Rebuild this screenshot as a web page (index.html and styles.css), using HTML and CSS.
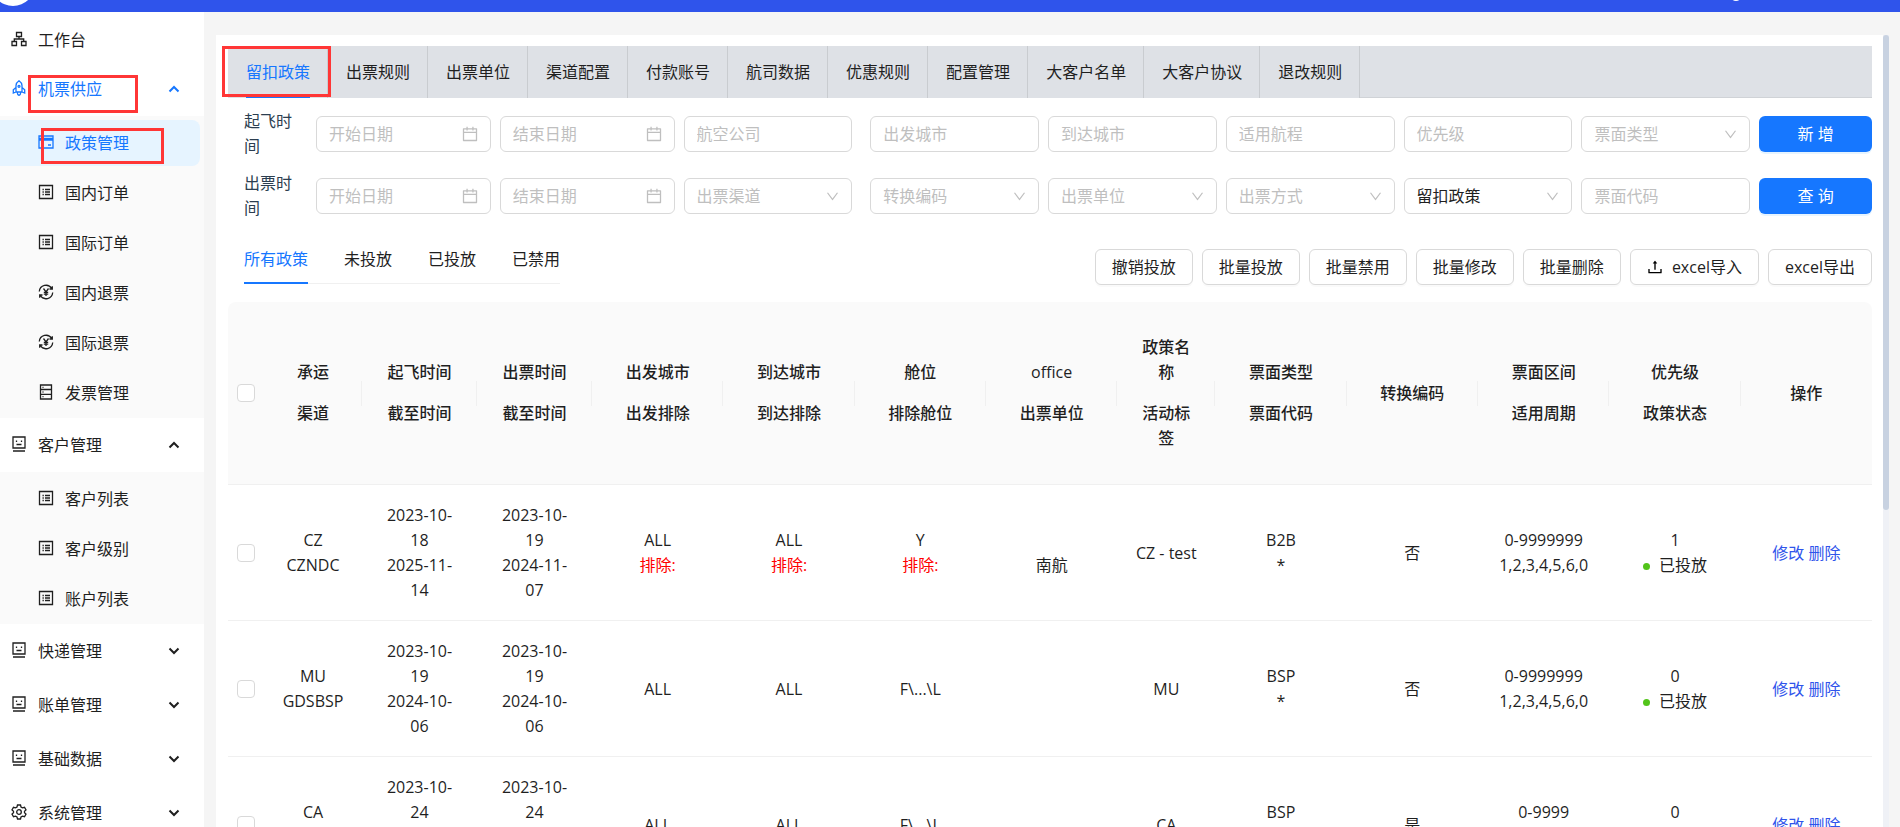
FILE: index.html
```html
<!DOCTYPE html>
<html lang="zh-CN">
<head>
<meta charset="UTF-8">
<meta name="viewport" content="width=device-width, initial-scale=1.0">
<title>政策管理</title>
<link rel="stylesheet" href="styles.css">
</head>
<body>
<!-- icons -->
<svg class="sprite" aria-hidden="true">
    <symbol id="i-cluster" viewBox="0 0 16 16"><path d="M5.500 1.500h5v4h-5zM1 10.500h4.500v4H1zM10.500 10.500H15v4h-4.500zM8 5.500V8M3.300 10.500V8h9.400v2.500"/></symbol>
    <symbol id="i-rocket" viewBox="0 0 16 16"><path d="M5 12V5.500C5 3.500 6.500 1.800 8 .8c1.500 1 3 2.700 3 4.700V12zM5 7.500l-2.700 2.300V13L5 12M11 7.500l2.700 2.300V13L11 12M6.300 12.500c0 1.500.8 2.500 1.700 2.900.9-.4 1.700-1.400 1.700-2.900"/><circle cx="8" cy="6.300" r="1"/></symbol>
    <symbol id="i-card" viewBox="0 0 16 16"><path d="M1 2h14v12H1zM1 6h14M1 4.500h14M10 11h3"/></symbol>
    <symbol id="i-profile" viewBox="0 0 16 16"><path d="M1.500 1.500h13v13h-13zM7 5.500h5M7 8h5M7 10.500h5M4.500 5.500h1.300M4.500 8h1.300M4.500 10.500h1.300"/></symbol>
    <symbol id="i-refund" viewBox="0 0 16 16"><path d="M1.300 7.500A6.700 6.700 0 0 1 13.700 4.500M14.700 8.500A6.700 6.700 0 0 1 2.300 11.500M14.300 2.200v2.800h-2.800M1.700 13.800V11h2.800M5.500 4.500L8 7.800l2.500-3.300M8 7.800V12M5.800 8.300h4.400M5.800 10.200h4.400"/></symbol>
    <symbol id="i-database" viewBox="0 0 16 16"><path d="M2.500 1h11v14h-11zM2.500 5.500h11M2.500 10.300h11M4.500 3.300h1M4.500 8h1M4.500 12.700h1"/></symbol>
    <symbol id="i-face" viewBox="0 0 16 16"><path d="M2 1h12v11H2zM2 15h12M5.500 4.500V6M10.500 4.500V6M5.500 8.500h5"/></symbol>
    <symbol id="i-setting" viewBox="0 0 16 16"><path d="M6.500 1h3l.5 2 1.500.9 2-.6 1.500 2.600L13.500 7.300v1.400L15 10.100l-1.500 2.600-2-.6-1.500.9-.5 2h-3L6 13l-1.500-.9-2 .6L1 10.100l1.500-1.400V7.300L1 5.900l1.500-2.600 2 .6L6 3z"/><circle cx="8" cy="8" r="2.300"/></symbol>
    <symbol id="i-arrow" viewBox="0 0 12 12"><path d="M1.500 3.500L6 8l4.500-4.500"/></symbol>
    <symbol id="i-down" viewBox="64 64 896 896"><path d="M884 256h-75c-5.100 0-9.900 2.500-12.900 6.600L512 654.200 227.900 262.600c-3-4.100-7.800-6.600-12.900-6.600h-75c-6.500 0-10.300 7.400-6.500 12.700l352.600 486.100c12.800 17.600 39 17.600 51.700 0l352.600-486.100c3.900-5.300.1-12.700-6.400-12.700z"/></symbol>
    <symbol id="i-calendar" viewBox="64 64 896 896"><path d="M880 184H712v-64c0-4.400-3.600-8-8-8h-56c-4.400 0-8 3.600-8 8v64H384v-64c0-4.400-3.600-8-8-8h-56c-4.400 0-8 3.600-8 8v64H144c-17.700 0-32 14.300-32 32v664c0 17.700 14.300 32 32 32h736c17.700 0 32-14.300 32-32V216c0-17.700-14.300-32-32-32zm-40 656H184V460h656v380zM184 392V256h128v48c0 4.400 3.600 8 8 8h56c4.400 0 8-3.600 8-8v-48h256v48c0 4.400 3.600 8 8 8h56c4.400 0 8-3.600 8-8v-48h128v136H184z"/></symbol>
    <symbol id="i-upload" viewBox="64 64 896 896"><path d="M400 317.700h73.900V656c0 4.400 3.600 8 8 8h60c4.400 0 8-3.600 8-8V317.700H624c6.700 0 10.400-7.700 6.300-12.900L518.300 163a8 8 0 00-12.600 0l-112 141.700c-4.100 5.300-.4 13 6.300 13zM878 626h-60c-4.400 0-8 3.600-8 8v154H214V634c0-4.400-3.600-8-8-8h-60c-4.400 0-8 3.600-8 8v198c0 17.700 14.300 32 32 32h684c17.700 0 32-14.300 32-32V634c0-4.400-3.600-8-8-8z"/></symbol>
</svg>

<header class="topbar">
    <span class="logo"></span>
    <span class="avatar"></span>
</header>

<div class="layout">
    <nav class="sidebar">
        <a href="#" class="menu-title first"><svg class="icon"><use href="#i-cluster"/></svg><span>工作台</span></a>
        <a href="#" class="menu-title active"><svg class="icon"><use href="#i-rocket"/></svg><span>机票供应</span><svg class="arrow up"><use href="#i-arrow"/></svg><i class="mark mark-supply"></i></a>
        <div class="submenu">
            <a href="#" class="menu-item selected"><svg class="icon"><use href="#i-card"/></svg><span>政策管理</span><i class="mark mark-policy"></i></a>
            <a href="#" class="menu-item"><svg class="icon"><use href="#i-profile"/></svg><span>国内订单</span></a>
            <a href="#" class="menu-item"><svg class="icon"><use href="#i-profile"/></svg><span>国际订单</span></a>
            <a href="#" class="menu-item"><svg class="icon"><use href="#i-refund"/></svg><span>国内退票</span></a>
            <a href="#" class="menu-item"><svg class="icon"><use href="#i-refund"/></svg><span>国际退票</span></a>
            <a href="#" class="menu-item"><svg class="icon"><use href="#i-database"/></svg><span>发票管理</span></a>
        </div>
        <a href="#" class="menu-title"><svg class="icon"><use href="#i-face"/></svg><span>客户管理</span><svg class="arrow up"><use href="#i-arrow"/></svg></a>
        <div class="submenu">
            <a href="#" class="menu-item"><svg class="icon"><use href="#i-profile"/></svg><span>客户列表</span></a>
            <a href="#" class="menu-item"><svg class="icon"><use href="#i-profile"/></svg><span>客户级别</span></a>
            <a href="#" class="menu-item"><svg class="icon"><use href="#i-profile"/></svg><span>账户列表</span></a>
        </div>
        <a href="#" class="menu-title"><svg class="icon"><use href="#i-face"/></svg><span>快递管理</span><svg class="arrow"><use href="#i-arrow"/></svg></a>
        <a href="#" class="menu-title"><svg class="icon"><use href="#i-face"/></svg><span>账单管理</span><svg class="arrow"><use href="#i-arrow"/></svg></a>
        <a href="#" class="menu-title"><svg class="icon"><use href="#i-face"/></svg><span>基础数据</span><svg class="arrow"><use href="#i-arrow"/></svg></a>
        <a href="#" class="menu-title"><svg class="icon"><use href="#i-setting"/></svg><span>系统管理</span><svg class="arrow"><use href="#i-arrow"/></svg></a>
    </nav>

    <main class="content">
        <div class="panel">
            <div class="tabs">
                <a href="#" class="tab active"><span>留扣政策</span><i class="mark mark-tab"></i></a>
                <a href="#" class="tab">出票规则</a>
                <a href="#" class="tab">出票单位</a>
                <a href="#" class="tab">渠道配置</a>
                <a href="#" class="tab">付款账号</a>
                <a href="#" class="tab">航司数据</a>
                <a href="#" class="tab">优惠规则</a>
                <a href="#" class="tab">配置管理</a>
                <a href="#" class="tab">大客户名单</a>
                <a href="#" class="tab">大客户协议</a>
                <a href="#" class="tab">退改规则</a>
            </div>

            <form class="filters">
                <label for="flyStart">起飞时间</label>
                <div class="field"><input type="text" id="flyStart" placeholder="开始日期"><svg class="suffix calendar"><use href="#i-calendar"/></svg></div>
                <div class="field"><input type="text" aria-label="起飞结束日期" placeholder="结束日期"><svg class="suffix calendar"><use href="#i-calendar"/></svg></div>
                <div class="field airline"><input type="text" aria-label="航空公司" placeholder="航空公司"></div>
                <div class="field"><input type="text" aria-label="出发城市" placeholder="出发城市"></div>
                <div class="field"><input type="text" aria-label="到达城市" placeholder="到达城市"></div>
                <div class="field"><input type="text" aria-label="适用航程" placeholder="适用航程"></div>
                <div class="field"><input type="text" aria-label="优先级" placeholder="优先级"></div>
                <div class="field"><select class="empty" aria-label="票面类型"><option>票面类型</option></select><svg class="suffix"><use href="#i-down"/></svg></div>
                <button type="button" class="btn-primary">新 增</button>

                <label for="issueStart">出票时间</label>
                <div class="field"><input type="text" id="issueStart" placeholder="开始日期"><svg class="suffix calendar"><use href="#i-calendar"/></svg></div>
                <div class="field"><input type="text" aria-label="出票结束日期" placeholder="结束日期"><svg class="suffix calendar"><use href="#i-calendar"/></svg></div>
                <div class="field airline"><select class="empty" aria-label="出票渠道"><option>出票渠道</option></select><svg class="suffix"><use href="#i-down"/></svg></div>
                <div class="field"><select class="empty" aria-label="转换编码"><option>转换编码</option></select><svg class="suffix"><use href="#i-down"/></svg></div>
                <div class="field"><select class="empty" aria-label="出票单位"><option>出票单位</option></select><svg class="suffix"><use href="#i-down"/></svg></div>
                <div class="field"><select class="empty" aria-label="出票方式"><option>出票方式</option></select><svg class="suffix"><use href="#i-down"/></svg></div>
                <div class="field"><select aria-label="政策种类"><option>留扣政策</option></select><svg class="suffix"><use href="#i-down"/></svg></div>
                <div class="field"><input type="text" aria-label="票面代码" placeholder="票面代码"></div>
                <button type="button" class="btn-primary">查 询</button>
            </form>

            <div class="toolbar">
                <div class="status-tabs">
                    <a href="#" class="active">所有政策</a>
                    <a href="#">未投放</a>
                    <a href="#">已投放</a>
                    <a href="#">已禁用</a>
                </div>
                <div class="actions">
                    <button type="button" class="btn">撤销投放</button>
                    <button type="button" class="btn">批量投放</button>
                    <button type="button" class="btn">批量禁用</button>
                    <button type="button" class="btn">批量修改</button>
                    <button type="button" class="btn">批量删除</button>
                    <button type="button" class="btn"><svg class="upload"><use href="#i-upload"/></svg>excel导入</button>
                    <button type="button" class="btn">excel导出</button>
                </div>
            </div>

            <table class="policy-table">
                <colgroup>
                    <col class="w-check"><col class="w-small"><col class="w-date"><col class="w-date">
                    <col><col><col><col><col class="w-small"><col><col><col><col><col>
                </colgroup>
                <thead>
                    <tr>
                        <th class="check"><input type="checkbox" aria-label="全选"></th>
                        <th><p>承运</p><p>渠道</p></th>
                        <th><p>起飞时间</p><p>截至时间</p></th>
                        <th><p>出票时间</p><p>截至时间</p></th>
                        <th><p>出发城市</p><p>出发排除</p></th>
                        <th><p>到达城市</p><p>到达排除</p></th>
                        <th><p>舱位</p><p>排除舱位</p></th>
                        <th><p class="latin">office</p><p>出票单位</p></th>
                        <th><p>政策名称</p><p>活动标签</p></th>
                        <th><p>票面类型</p><p>票面代码</p></th>
                        <th>转换编码</th>
                        <th><p>票面区间</p><p>适用周期</p></th>
                        <th><p>优先级</p><p>政策状态</p></th>
                        <th>操作</th>
                    </tr>
                </thead>
                <tbody>
                    <tr>
                        <td class="check"><input type="checkbox" aria-label="选择 CZ"></td>
                        <td>CZ<br>CZNDC</td>
                        <td>2023-10-18<br>2025-11-14</td>
                        <td>2023-10-19<br>2024-11-07</td>
                        <td>ALL<br><span class="exclude">排除:</span></td>
                        <td>ALL<br><span class="exclude">排除:</span></td>
                        <td>Y<br><span class="exclude">排除:</span></td>
                        <td>&nbsp;<br>南航</td>
                        <td>CZ - test</td>
                        <td>B2B<br>*</td>
                        <td>否</td>
                        <td>0-9999999<br>1,2,3,4,5,6,0</td>
                        <td>1<br><span class="status">已投放</span></td>
                        <td><a href="#">修改</a> <a href="#">删除</a></td>
                    </tr>
                    <tr>
                        <td class="check"><input type="checkbox" aria-label="选择 MU"></td>
                        <td>MU<br>GDSBSP</td>
                        <td>2023-10-19<br>2024-10-06</td>
                        <td>2023-10-19<br>2024-10-06</td>
                        <td>ALL</td>
                        <td>ALL</td>
                        <td>F\...\L</td>
                        <td></td>
                        <td>MU</td>
                        <td>BSP<br>*</td>
                        <td>否</td>
                        <td>0-9999999<br>1,2,3,4,5,6,0</td>
                        <td>0<br><span class="status">已投放</span></td>
                        <td><a href="#">修改</a> <a href="#">删除</a></td>
                    </tr>
                    <tr>
                        <td class="check"><input type="checkbox" aria-label="选择 CA"></td>
                        <td>CA<br>GDSBSP</td>
                        <td>2023-10-24<br>2024-10-06</td>
                        <td>2023-10-24<br>2024-10-06</td>
                        <td>ALL</td>
                        <td>ALL</td>
                        <td>F\...\L</td>
                        <td></td>
                        <td>CA</td>
                        <td>BSP<br>*</td>
                        <td>是</td>
                        <td>0-9999<br>1,2,3,4,5,6,0</td>
                        <td>0<br><span class="status">已投放</span></td>
                        <td><a href="#">修改</a> <a href="#">删除</a></td>
                    </tr>
                </tbody>
            </table>
        </div>
        <div class="scrollbar"><div class="thumb"></div></div>
    </main>
</div>
</body>
</html>
```

FILE: styles.css
```css
* {
    box-sizing: border-box;
}
body {
    display: flex;
    flex-direction: column;
    height: 100vh;
    margin: 0;
    overflow: hidden;
    background-color: #f5f5f5;
    color: #1f1f1f;
    font-family: "Open Sans", "Noto Sans CJK SC", sans-serif;
    font-size: 16px;
    line-height: 25px;
}
a {
    color: inherit;
    text-decoration: none;
}
input, select, button {
    font: inherit;
    color: inherit;
}
.sprite {
    position: absolute;
    width: 0;
    height: 0;
}

/* top bar */
.topbar {
    position: relative;
    flex: none;
    height: 12px;
    overflow: hidden;
    background-color: #2f54eb;
}
.logo {
    position: absolute;
    left: -9px;
    bottom: 6px;
    width: 44px;
    height: 44px;
    border-radius: 50%;
    background-color: #fff;
}
.avatar {
    position: absolute;
    right: 158px;
    bottom: 11px;
    width: 12px;
    height: 12px;
    border-radius: 50%;
    background-color: #fff;
}
.layout {
    display: flex;
    flex: 1;
    min-height: 0;
}

/* sidebar */
.sidebar {
    flex: none;
    width: 204px;
    overflow: hidden;
    background-color: #fff;
}
.menu-title, .menu-item {
    position: relative;
    display: flex;
    align-items: center;
}
.menu-title {
    gap: 11px;
    height: 54px;
    padding: 0 24px 0 11px;
}
.menu-title.first {
    height: 50px;
    padding-top: 6px;
}
.menu-title.active {
    color: #1677ff;
}
.submenu {
    display: flex;
    flex-direction: column;
    gap: 4px;
    padding: 4px 0 2px;
    background-color: #fafafa;
}
.menu-item {
    gap: 11px;
    height: 46px;
    margin-right: 4px;
    padding-left: 38px;
    border-radius: 0 8px 8px 0;
}
.menu-item.selected {
    background-color: #e6f4ff;
    color: #1677ff;
}
.icon, .arrow {
    flex: none;
    width: 16px;
    height: 16px;
    fill: none;
    stroke: currentColor;
}
.icon {
    margin-bottom: 2px;
    stroke-width: 1.3;
}
.arrow {
    width: 12px;
    height: 12px;
    margin-left: auto;
    stroke-width: 2;
}
.arrow.up {
    transform: rotate(180deg);
}

/* red frames */
.mark {
    position: absolute;
    z-index: 1;
    border: 3px solid #ff3636;
    pointer-events: none;
}
.mark-supply {
    left: 28px;
    top: 13px;
    width: 110px;
    height: 38px;
}
.mark-policy {
    left: 41px;
    top: 8px;
    width: 123px;
    height: 36px;
}
.mark-tab {
    left: -6px;
    top: 0;
    width: 109px;
    height: 51px;
}

/* content */
.content {
    display: flex;
    flex: 1;
    min-width: 0;
    padding: 23px 11px 0 12px;
}
.panel {
    flex: 1;
    min-width: 0;
    padding: 11px 11px 0 12px;
    overflow: hidden;
    background-color: #fff;
}
.scrollbar {
    width: 6px;
    background-color: #eff1f6;
}
.thumb {
    height: 60%;
    border-radius: 3px;
    background-color: #c8d2e1;
}
.tabs {
    display: flex;
    height: 52px;
    border-bottom: 1px solid #d0d3d7;
    background-color: #dee1e6;
}
.tab {
    position: relative;
    height: 52px;
    padding: 14px 17px 0 18px;
    border-right: 1px solid #c9ccd0;
    background-color: #dee1e6;
}
.tab.active {
    color: #1677ff;
}
.tab.active span {
    display: block;
    height: 38px;
    border-bottom: 2px solid #1677ff;
}

/* filters */
.filters {
    display: grid;
    grid-template-columns: 63px 175fr 175fr 178fr 169fr 169fr 169fr 169fr 169fr 113fr;
    align-items: center;
    gap: 12px 9px;
    padding: 11px 0 0 16px;
    color: #2c3e50;
}
.field {
    position: relative;
    min-width: 0;
}
.airline {
    margin-right: 9px;
}
.field input, .field select {
    display: block;
    width: 100%;
    height: 36px;
    padding: 0 12px;
    border: 1px solid #d9d9d9;
    border-radius: 6px;
    background-color: #fff;
    color: #1f1f1f;
    appearance: none;
}
.field input::placeholder {
    color: #bfbfbf;
}
.field select.empty {
    color: #bfbfbf;
}
.suffix {
    position: absolute;
    right: 13px;
    top: 12px;
    width: 13px;
    height: 13px;
    fill: #bfbfbf;
    pointer-events: none;
}
.suffix.calendar {
    top: 10px;
    width: 16px;
    height: 16px;
}
.btn-primary {
    height: 36px;
    padding: 0;
    border: none;
    border-radius: 6px;
    background-color: #1677ff;
    color: #fff;
    box-shadow: 0 2px 0 rgba(5, 145, 255, 0.1);
}

/* status tabs and buttons */
.toolbar {
    display: flex;
    justify-content: space-between;
    align-items: flex-end;
    padding: 26px 0 17px 16px;
}
.status-tabs {
    display: flex;
    gap: 36px;
    margin-bottom: 1px;
    border-bottom: 1px solid #f0f0f0;
}
.status-tabs a {
    height: 37px;
    margin-bottom: -1px;
}
.status-tabs .active {
    border-bottom: 2px solid #1677ff;
    color: #1677ff;
}
.actions {
    display: flex;
    gap: 9px;
}
.btn {
    display: flex;
    align-items: center;
    height: 36px;
    padding: 0 16px;
    border: 1px solid #d9d9d9;
    border-radius: 6px;
    background-color: #fff;
    box-shadow: 0 2px 0 rgba(0, 0, 0, 0.02);
}
.upload {
    width: 16px;
    height: 16px;
    margin-right: 9px;
}

/* table */
.policy-table {
    width: 100%;
    table-layout: fixed;
    border-collapse: separate;
    border-spacing: 0;
    text-align: center;
}
.w-check {
    width: 36px;
}
.w-small {
    width: 98px;
}
.w-date {
    width: 115px;
}
th {
    position: relative;
    padding: 17px 18px;
    border-bottom: 1px solid #f0f0f0;
    background-color: #fafafa;
    font-weight: 500;
}
th:first-child {
    border-top-left-radius: 8px;
}
th:last-child {
    border-top-right-radius: 8px;
}
/* short divider between header cells */
th:not(.check):not(:last-child)::after {
    content: "";
    position: absolute;
    right: 0;
    top: 50%;
    width: 1px;
    height: 25px;
    margin-top: -12px;
    background-color: #f0f0f0;
}
th p {
    margin: 16px 0;
}
th .latin {
    font-weight: 400;
}
td {
    padding: 18px 18px 17px;
    border-bottom: 1px solid #f0f0f0;
}
.policy-table .check {
    padding-left: 0;
    padding-right: 0;
}
.check input {
    display: block;
    width: 18px;
    height: 18px;
    margin: 0 auto;
    border: 1px solid #d9d9d9;
    border-radius: 4px;
    background-color: #fff;
    appearance: none;
}
td a {
    color: #2f54eb;
}
.exclude {
    color: #f00;
}
.status::before {
    content: "";
    display: inline-block;
    width: 7px;
    height: 7px;
    margin-right: 9px;
    border-radius: 50%;
    background-color: #52c41a;
    vertical-align: middle;
}
```
